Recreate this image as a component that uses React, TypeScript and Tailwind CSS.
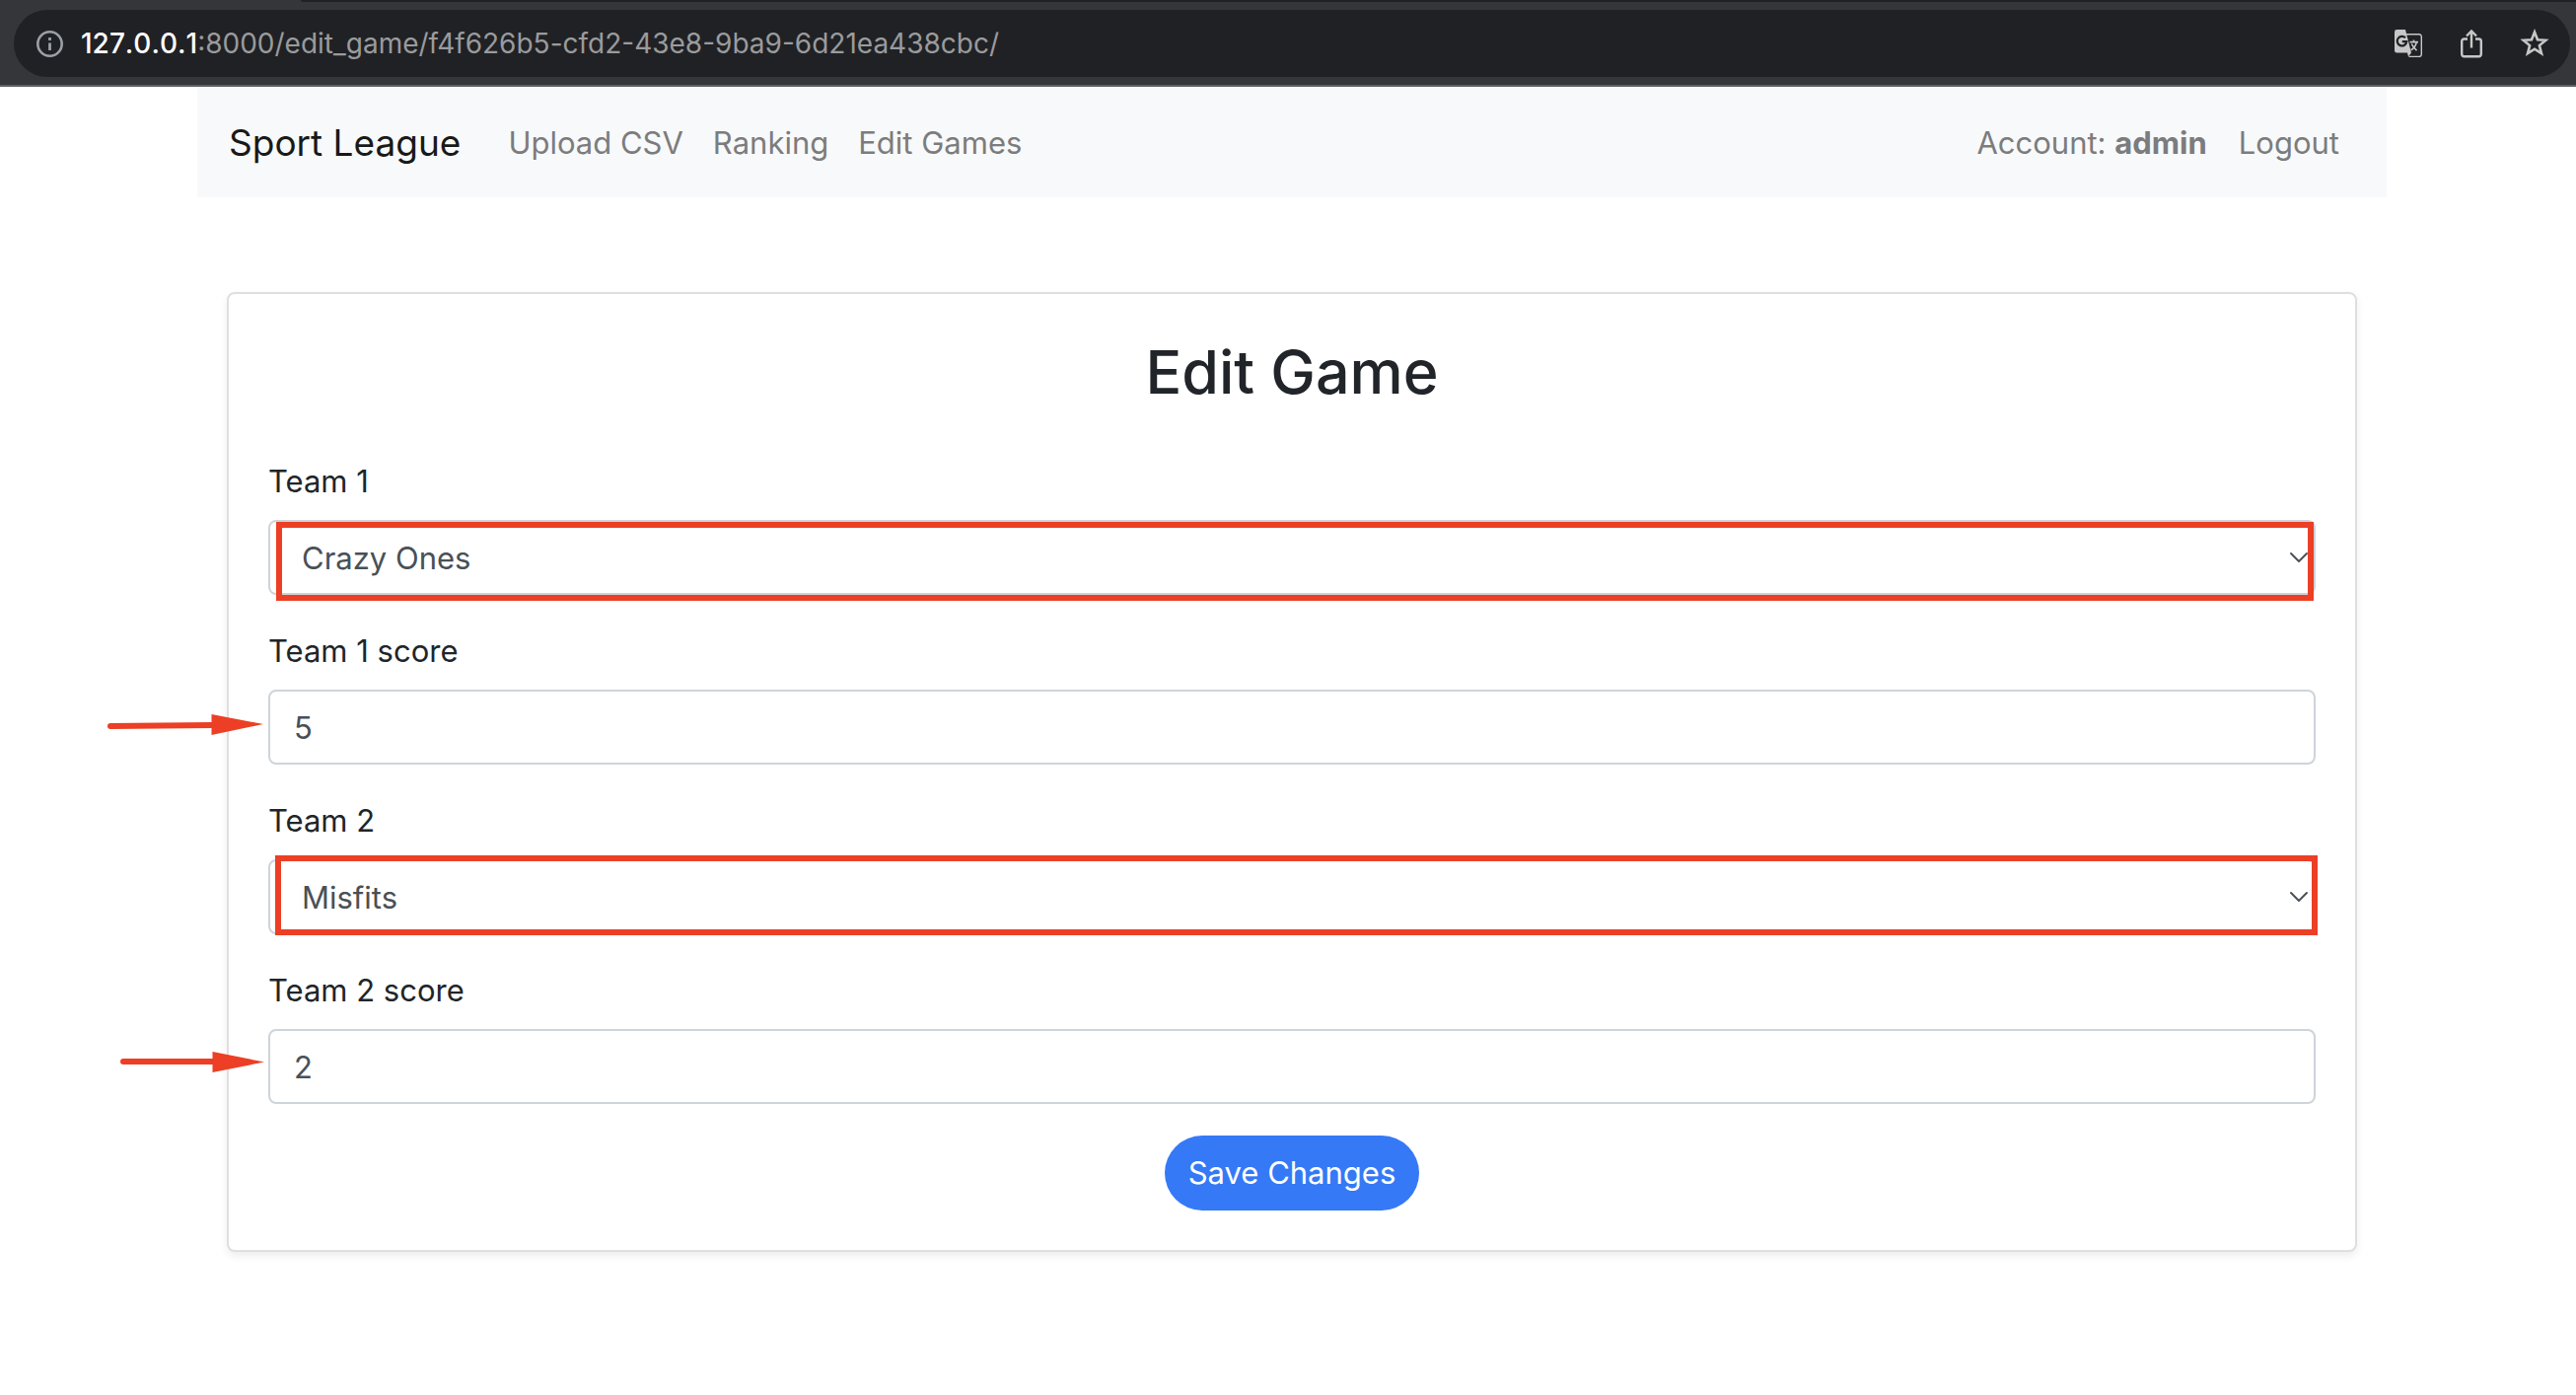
import { useState } from "react";
import type { ReactNode } from "react";

const TEAMS = ["Crazy Ones", "Misfits", "Fantastics", "FC Super", "FC Awesome"];

function InfoIcon() {
  return (
    <svg className="size-7" viewBox="0 0 28 28" fill="none" stroke="#9aa0a6" aria-hidden="true">
      <circle cx="14.500" cy="14.500" r="12.200" strokeWidth="2.600" />
      <path d="M14.500 13.500v7.500M14.500 8v3" strokeWidth="2.800" />
    </svg>
  );
}

function TranslateIcon() {
  return (
    <svg className="size-7" viewBox="0 0 28 28" fill="none" aria-hidden="true">
      <path d="M12 4.800h13a2.300 2.300 0 0 1 2.300 2.300v18a2.300 2.300 0 0 1-2.300 2.300H14.500" stroke="#c7c7c7" strokeWidth="1.400" />
      <path d="M2.400 0H11l6 23.600-3 4-1-4H2.400A2.400 2.400 0 0 1 0 21.200V2.400A2.400 2.400 0 0 1 2.400 0Z" fill="#c7c7c7" />
      <path d="M11 8.300a4.800 4.800 0 1 0 1.300 3.900H7.800" stroke="#202124" strokeWidth="2.200" />
      <path d="M15.500 12.600h8.500M19.500 10.500v2M22.300 12.800c-.8 3.600-3 6.400-5.700 8M17.300 14.500c1.200 2.800 3 4.600 5.200 6.800" stroke="#c7c7c7" strokeWidth="1.600" />
    </svg>
  );
}

function ShareIcon() {
  return (
    <svg className="h-8 w-7" viewBox="0 0 28 32" fill="none" stroke="#c7c7c7" strokeWidth="2.400" aria-hidden="true">
      <path d="M10 11.500H6.500a2.300 2.300 0 0 0-2.300 2.300v13.200a2.300 2.300 0 0 0 2.300 2.300h15a2.300 2.300 0 0 0 2.300-2.300V13.800a2.300 2.300 0 0 0-2.300-2.300H18" />
      <path d="M14 20.500V4M9 8.500l5-5 5 5" />
    </svg>
  );
}

function StarIcon() {
  return (
    <svg className="size-8" viewBox="0 0 32 32" fill="none" stroke="#c7c7c7" strokeWidth="2.600" aria-hidden="true">
      <path d="M16 4.500l3 7.700 8.300.6-6.400 5.300 2.100 8.100-7-4.500-7 4.500 2.100-8.100-6.400-5.300 8.300-.6Z" />
    </svg>
  );
}

function BrowserBar() {
  return (
    <div className="border-b-2 border-[#5f6064] bg-[#35363a]">
      <div className="ml-[305px] h-0.5 rounded-bl bg-[#202124]" />
      <div className="pt-2 pr-1.5 pb-2 pl-3.5">
        <div className="flex h-[68px] items-center rounded-full bg-[#202124] pr-5 pl-5.5">
          <InfoIcon />
          <div className="ml-4.5 flex-1 text-[28px] text-[#9a9b9d]">
            <span className="font-medium text-white [font-kerning:none]">127.0.0.1</span>:8000/edit_game/f4f626b5-cfd2-43e8-9ba9-6d21ea438cbc/
          </div>
          <div className="flex items-center gap-8">
            <button type="button" aria-label="Translate this page" className="flex size-8 items-center justify-center"><TranslateIcon /></button>
            <button type="button" aria-label="Share this page" className="flex size-8 items-center justify-center"><ShareIcon /></button>
            <button type="button" aria-label="Bookmark this page" className="flex size-8 items-center justify-center"><StarIcon /></button>
          </div>
        </div>
      </div>
    </div>
  );
}

function NavBar() {
  return (
    <nav className="flex h-28 items-center bg-[#f8f9fa] px-8 pt-0.5 text-[31px] text-[#7c7c7d]">
      <a href="#" className="mr-12 text-[37px] text-[#191919]">Sport League</a>
      <div className="flex flex-1 gap-[30px]">
        <a href="#">Upload CSV</a>
        <a href="#">Ranking</a>
        <a href="#">Edit Games</a>
      </div>
      <div className="flex gap-8 pr-4">
        <a href="#">Account: <b>admin</b></a>
        <a href="#">Logout</a>
      </div>
    </nav>
  );
}

function Field({ id, label, children }: { id: string; label: string; children: ReactNode }) {
  return (
    <div className="mb-8">
      <label htmlFor={id} className="mb-3.5 block leading-[50px]">{label}</label>
      <div className="relative h-[76px]">{children}</div>
    </div>
  );
}

function TeamSelect({ id, team }: { id: string; team: string }) {
  const [value, setValue] = useState(team);
  return (
    <>
      <select
        id={id}
        value={value}
        onChange={(e) => setValue(e.target.value)}
        className="size-full appearance-none rounded-lg border-2 border-[#ced4da] bg-white px-8 pt-0.5 text-[#495057]"
      >
        {TEAMS.map((t) => <option key={t}>{t}</option>)}
      </select>
      <svg className="pointer-events-none absolute top-8 right-[7px] h-3 w-5" viewBox="0 0 20 12" fill="none" stroke="#4b5157" strokeWidth="2" strokeLinecap="round" strokeLinejoin="round" aria-hidden="true">
        <path d="M2 2l8 8 8-8" />
      </svg>
    </>
  );
}

function ScoreInput({ id, score }: { id: string; score: string }) {
  return (
    <input
      id={id}
      defaultValue={score}
      inputMode="numeric"
      className="size-full rounded-lg border-2 border-[#ced4da] bg-white px-6 text-[#495057]"
    />
  );
}

export default function App() {
  return (
    <div className="min-h-screen bg-white font-['Inter',sans-serif] text-[31px] text-[#212529]">
      <BrowserBar />
      <div className="pr-48 pl-50">
        <NavBar />
        <main className="px-7.5 pt-24">
          <form
            onSubmit={(e) => e.preventDefault()}
            className="rounded-lg border-2 border-[#dfdfdf] bg-white p-10 shadow-[0_4px_8px_rgba(0,0,0,0.075)]"
          >
            <h1 className="mb-[46px] text-center text-[61px] leading-[79px] font-medium">Edit Game</h1>
            <Field id="team1" label="Team 1">
              <TeamSelect id="team1" team="Crazy Ones" />
              <div className="pointer-events-none absolute top-0.5 right-0.5 -bottom-1.5 left-2 border-6 border-[#ec3f25]" />
            </Field>
            <Field id="score1" label="Team 1 score">
              <ScoreInput id="score1" score="5" />
              <svg className="pointer-events-none absolute top-6 right-full mr-1 h-[22px] w-40" viewBox="0 0 160 22" aria-hidden="true">
                <path d="M4 13l104-1" stroke="#ec3f25" strokeWidth="6" strokeLinecap="round" />
                <path d="M106.500 1v21L159 11Z" fill="#ec3f25" />
              </svg>
            </Field>
            <Field id="team2" label="Team 2">
              <TeamSelect id="team2" team="Misfits" />
              <div className="pointer-events-none absolute -top-1 -right-0.5 -bottom-px left-[7px] border-6 border-[#ec3f25]" />
            </Field>
            <Field id="score2" label="Team 2 score">
              <ScoreInput id="score2" score="2" />
              <svg className="pointer-events-none absolute top-[22px] right-full mr-1 h-[22px] w-40" viewBox="0 0 160 22" aria-hidden="true">
                <path d="M17 11h91" stroke="#ec3f25" strokeWidth="6" strokeLinecap="round" />
                <path d="M107.500 1v21L160 11.500Z" fill="#ec3f25" />
              </svg>
            </Field>
            <div className="flex justify-center">
              <button type="submit" className="h-[76px] rounded-full bg-[#3579f6] px-6 text-white">
                Save Changes
              </button>
            </div>
          </form>
        </main>
      </div>
    </div>
  );
}
